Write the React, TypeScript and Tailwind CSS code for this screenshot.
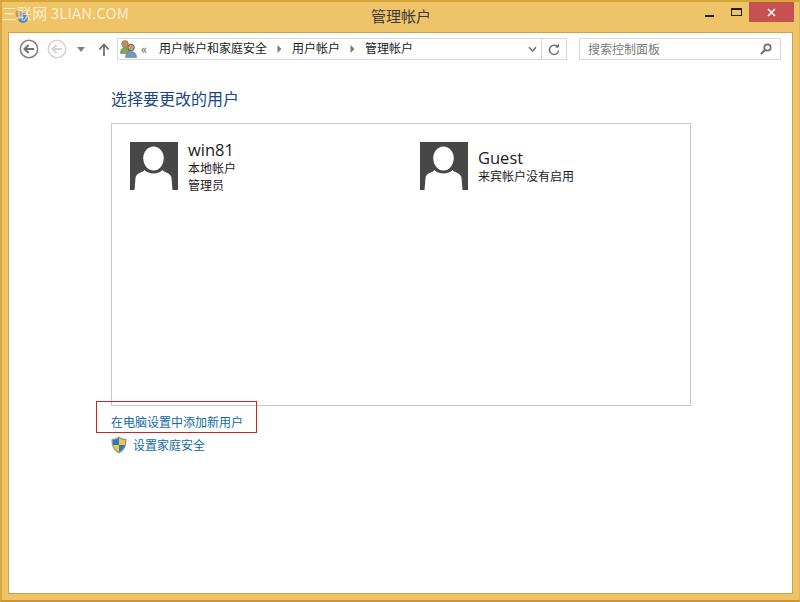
import React from "react";

const font = { fontFamily: '"Noto Sans CJK SC", "Noto Sans", sans-serif' };

function Avatar() {
  return (
    <svg width="48" height="48" viewBox="0 0 48 48" className="shrink-0">
      <rect width="48" height="48" fill="#474747" />
      <ellipse cx="23.5" cy="16.5" rx="10.3" ry="12" fill="#fff" />
      <path d="M4.5 48 L5.5 36 C6 32.5 9 31 13 29.5 L14.5 28 C18 32.5 29 32.5 32.5 28 L34 29.5 C38 31 41 32.5 41.5 36 L42.5 48 Z" fill="#fff" />
    </svg>
  );
}

function Chevron() {
  return (
    <svg width="5" height="8" viewBox="0 0 5 8" className="shrink-0">
      <path d="M0.5 0 L4.5 4 L0.5 8 Z" fill="#7b7b7b" />
    </svg>
  );
}

function UsersIcon() {
  return (
    <svg width="17" height="18" viewBox="0 0 17 18" className="shrink-0">
      <circle cx="5" cy="4" r="3.4" fill="#b8975a" stroke="#7c6a45" strokeWidth="0.6" />
      <path d="M0.5 13.5 C0.5 9 2.5 7.5 5 7.5 C7.5 7.5 9.5 9 9.5 13.5 Z" fill="#86a556" stroke="#5f7f3c" strokeWidth="0.5" />
      <circle cx="11" cy="7.5" r="3.3" fill="#c9a074" stroke="#4f4a44" strokeWidth="0.8" />
      <path d="M5.5 17.5 C5.5 13.5 8 11.5 11 11.5 C14 11.5 16.5 13.5 16.5 17.5 Z" fill="#6f9ac6" stroke="#4a6f97" strokeWidth="0.5" />
    </svg>
  );
}

function Shield() {
  return (
    <svg width="16" height="18" viewBox="0 0 16 18" className="shrink-0">
      <path d="M8 0.5 C10 2 12.5 2.8 15.5 3 C15.8 9 14 14.5 8 17.5 C2 14.5 0.2 9 0.5 3 C3.5 2.8 6 2 8 0.5 Z" fill="#8f959c" />
      <path d="M8 2.2 V9 H2 C1.9 7.5 1.8 6 1.9 4.2 C4 4 6 3.4 8 2.2 Z" fill="#2f78bd" />
      <path d="M8 2.2 C10 3.4 12 4 14.1 4.2 C14.2 6 14.1 7.5 14 9 H8 Z" fill="#f2c73c" />
      <path d="M2 9 H8 V15.8 C4.5 14 2.6 12 2 9 Z" fill="#f2c73c" />
      <path d="M8 9 H14 C13.4 12 11.5 14 8 15.8 Z" fill="#2f78bd" />
    </svg>
  );
}

function CircleArrow({ color, border }: { color: string; border: string }) {
  return (
    <svg width="20" height="20" viewBox="0 0 20 20" className="shrink-0">
      <circle cx="10" cy="10" r="8.7" fill="#fff" stroke={border} strokeWidth="1.5" />
      <path d="M15 10 H6 M9.5 6 L5.5 10 L9.5 14" fill="none" stroke={color} strokeWidth="2" />
    </svg>
  );
}

export default function App() {
  return (
    <div
      style={font}
      className="relative w-[800px] h-[602px] overflow-hidden flex flex-col bg-[#efc468] border-t-2 border-l-2 border-b-2 border-r border-t-[#d6a63a] border-l-[#d9a63f] border-b-[#c9982f] border-r-[#e2b654]"
    >
      <div className="absolute left-0 top-0 text-[15px] leading-[22px] text-white/70 whitespace-nowrap tracking-[0.1px]">
        三联网 3LIAN.COM
      </div>

      <div className="h-[30px] shrink-0 flex items-start pl-[6px] pr-[5px]">
        <div className="flex-1 pl-[5px] pt-[6px]">
          <svg width="16" height="16" viewBox="0 0 16 16">
            <circle cx="10" cy="10" r="5" fill="#4f86b8" />
            <circle cx="6" cy="6" r="3.4" fill="#b49a62" />
          </svg>
        </div>
        <div className="w-[200px] pr-[5px] text-center text-[15px] leading-[28px] text-[#3a3a3a]">管理帐户</div>
        <div className="flex-1 flex justify-end items-start">
          <div className="w-[27px] h-[20px] flex items-end justify-center pb-[5px]">
            <div className="w-[9px] h-[2px] bg-[#1f1f1f]" />
          </div>
          <div className="w-[26px] h-[20px] flex justify-center pt-[6px]">
            <div className="w-[11px] h-[8px] border border-t-2 border-[#1f1f1f]" />
          </div>
          <div className="w-[45px] h-[20px] bg-[#c75050] flex items-center justify-center">
            <svg width="9" height="9" viewBox="0 0 9 9">
              <path d="M1 1 L8 8 M8 1 L1 8" stroke="#fff" strokeWidth="1.6" />
            </svg>
          </div>
        </div>
      </div>

      <div className="flex-1 mx-[6px] mb-[6px] bg-white border border-[#c9a24a] flex flex-col min-h-0">
        <div className="h-[22px] mt-[5px] shrink-0 flex items-stretch">
          <div className="w-[10px] shrink-0" />
          <div className="flex items-center w-[98px] shrink-0">
            <CircleArrow color="#6f6f6f" border="#7f7f7f" />
            <div className="w-[8px]" />
            <CircleArrow color="#d4d4d4" border="#d4d4d4" />
            <svg width="8" height="5" viewBox="0 0 8 5" className="ml-[10px]">
              <path d="M0 0 H8 L4 5 Z" fill="#808080" />
            </svg>
            <svg width="12" height="13" viewBox="0 0 12 13" className="ml-[13px]">
              <path d="M6 13 V2 M1.5 6.5 L6 1.5 L10.5 6.5" fill="none" stroke="#6a6a6a" strokeWidth="1.7" />
            </svg>
          </div>
          <div className="w-[450px] shrink-0 border border-[#d9d9d9] flex items-center text-[12px] text-[#1a1a1a]">
            <div className="ml-[2px]"><UsersIcon /></div>
            <span className="ml-[4px] w-[18px] text-[13px] leading-[16px] text-[#606060]">«</span>
            <span className="pb-[2px]">用户帐户和家庭安全</span>
            <div className="ml-[10px] mr-[10px]"><Chevron /></div>
            <span className="pb-[2px]">用户帐户</span>
            <div className="ml-[10px] mr-[10px]"><Chevron /></div>
            <span className="pb-[2px]">管理帐户</span>
            <div className="flex-1 flex justify-end pr-[4px]">
              <svg width="9" height="7" viewBox="0 0 9 7">
                <path d="M1 1.2 L4.5 5 L8 1.2" fill="none" stroke="#707070" strokeWidth="1.6" />
              </svg>
            </div>
            <div className="w-[25px] h-full border-l border-[#d9d9d9] flex items-center justify-center">
              <svg width="12" height="13" viewBox="0 0 12 13">
                <path d="M9.8 4.2 A4.6 4.6 0 1 0 10.6 7.5" fill="none" stroke="#707070" strokeWidth="1.5" />
                <path d="M7 4.6 H11 V0.8 Z" fill="#707070" />
              </svg>
            </div>
          </div>
          <div className="w-[12px] shrink-0" />
          <div className="w-[202px] shrink-0 border border-[#d9d9d9] flex items-center justify-between pl-[8px] pr-[8px] text-[12px] text-[#7a7a7a]">
            <span>搜索控制面板</span>
            <svg width="12" height="12" viewBox="0 0 12 12">
              <circle cx="7.5" cy="4.5" r="3.2" fill="none" stroke="#6e6e6e" strokeWidth="1.7" />
              <path d="M5 7 L1 11" stroke="#6e6e6e" strokeWidth="2.2" />
            </svg>
          </div>
        </div>

        <div className="pl-[102px] flex flex-col flex-1 min-h-0">
          <h1 className="mt-[26px] text-[16px] leading-[24px] font-normal text-[#19478a]">选择要更改的用户</h1>
          <div className="mt-[13px] w-[580px] h-[283px] border border-[#c8c8c8] pt-[18px] pl-[18px] flex items-start">
            <div className="w-[290px] flex gap-[10px]">
              <Avatar />
              <div className="flex flex-col text-[#1a1a1a]">
                <div className="text-[16.5px] leading-[16px]" style={{ fontFamily: '"Open Sans", sans-serif' }}>win81</div>
                <div className="text-[12px] leading-[16px] mt-[2px]">本地帐户</div>
                <div className="text-[12px] leading-[16px] mt-[1px]">管理员</div>
              </div>
            </div>
            <div className="flex gap-[10px]">
              <Avatar />
              <div className="flex flex-col text-[#1a1a1a]">
                <div className="text-[16.5px] leading-[16px] mt-[8px]" style={{ fontFamily: '"Open Sans", sans-serif' }}>Guest</div>
                <div className="text-[12px] leading-[16px] mt-[2px]">来宾帐户没有启用</div>
              </div>
            </div>
          </div>
          <div className="mt-[7px] text-[12px] leading-[18px] text-[#0f6aa8]">在电脑设置中添加新用户</div>
          <div className="mt-[5px] flex items-center gap-[6px] text-[12px] leading-[18px] text-[#0f6aa8]">
            <Shield />
            <span>设置家庭安全</span>
          </div>
        </div>
      </div>

      <div className="absolute left-[94px] top-[399px] w-[161px] h-[32px] border border-[#c0272d]" />
    </div>
  );
}
